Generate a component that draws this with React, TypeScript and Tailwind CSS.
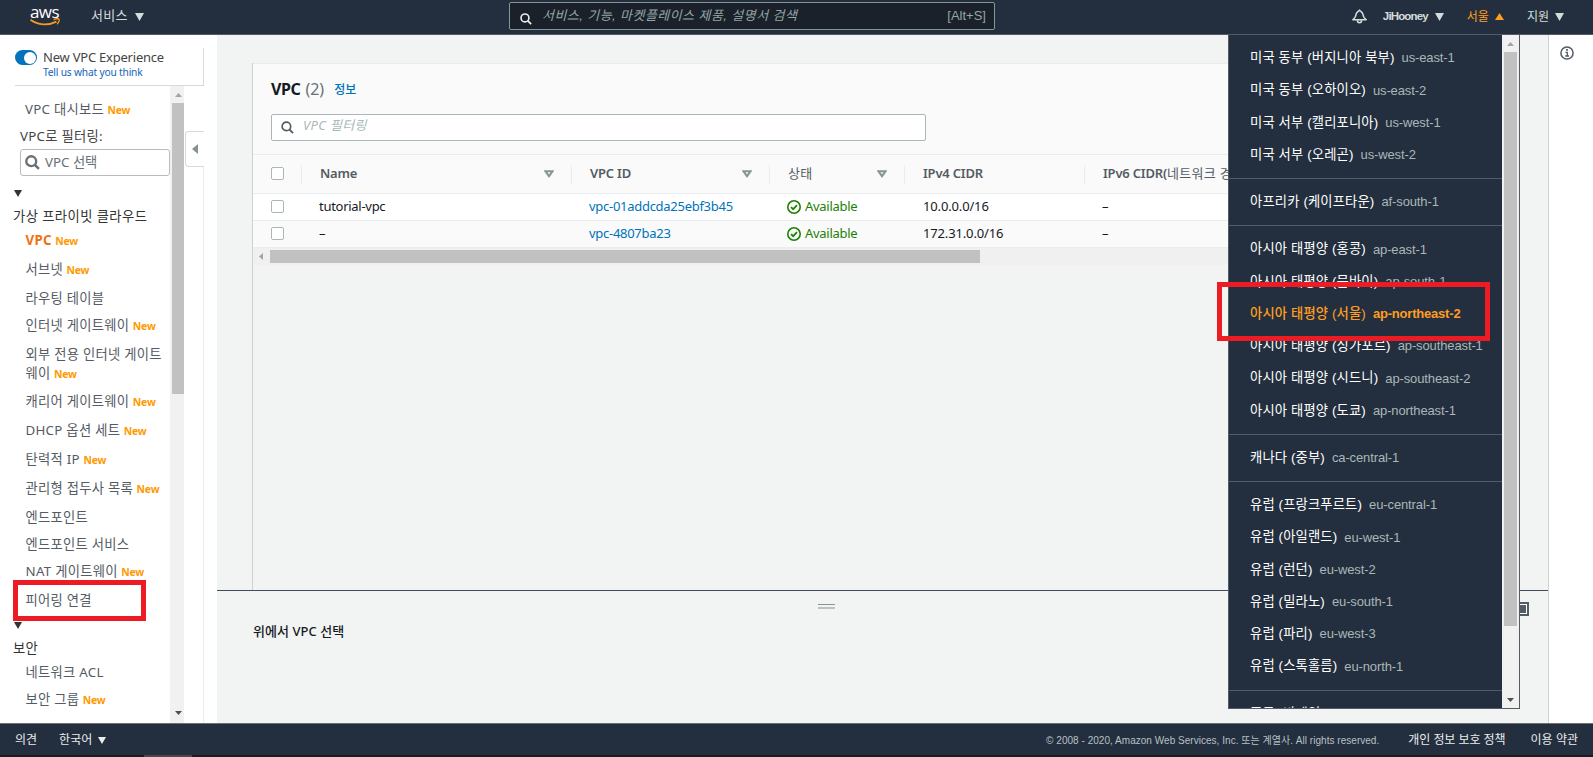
import { useState } from 'react';

interface NavEntry {
  label: string;
  isNew?: boolean;
  active?: boolean;
  size: string;
}

interface Region {
  name: string;
  code: string;
}

const vpcLinks: NavEntry[] = [
  { label: 'VPC', isNew: true, active: true, size: 'h-[29px]' },
  { label: '서브넷', isNew: true, size: 'h-[29px]' },
  { label: '라우팅 테이블', size: 'h-[27px]' },
  { label: '인터넷 게이트웨이', isNew: true, size: 'h-[29px]' },
  { label: '외부 전용 인터넷 게이트웨이', isNew: true, size: 'h-[47px]' },
  { label: '캐리어 게이트웨이', isNew: true, size: 'h-[29px]' },
  { label: 'DHCP 옵션 세트', isNew: true, size: 'h-[29px]' },
  { label: '탄력적 IP', isNew: true, size: 'h-[29px]' },
  { label: '관리형 접두사 목록', isNew: true, size: 'h-[29px]' },
  { label: '엔드포인트', size: 'h-[27px]' },
  { label: '엔드포인트 서비스', size: 'h-[27px]' },
  { label: 'NAT 게이트웨이', isNew: true, size: 'h-[29px]' },
  { label: '피어링 연결', size: 'h-[28px]' },
];

const securityLinks: NavEntry[] = [
  { label: '네트워크 ACL', size: 'h-[27px]' },
  { label: '보안 그룹', isNew: true, size: 'h-[27px]' },
];

const regionGroups: Region[][] = [
  [
    { name: '미국 동부 (버지니아 북부)', code: 'us-east-1' },
    { name: '미국 동부 (오하이오)', code: 'us-east-2' },
    { name: '미국 서부 (캘리포니아)', code: 'us-west-1' },
    { name: '미국 서부 (오레곤)', code: 'us-west-2' },
  ],
  [{ name: '아프리카 (케이프타운)', code: 'af-south-1' }],
  [
    { name: '아시아 태평양 (홍콩)', code: 'ap-east-1' },
    { name: '아시아 태평양 (뭄바이)', code: 'ap-south-1' },
    { name: '아시아 태평양 (서울)', code: 'ap-northeast-2' },
    { name: '아시아 태평양 (싱가포르)', code: 'ap-southeast-1' },
    { name: '아시아 태평양 (시드니)', code: 'ap-southeast-2' },
    { name: '아시아 태평양 (도쿄)', code: 'ap-northeast-1' },
  ],
  [{ name: '캐나다 (중부)', code: 'ca-central-1' }],
  [
    { name: '유럽 (프랑크푸르트)', code: 'eu-central-1' },
    { name: '유럽 (아일랜드)', code: 'eu-west-1' },
    { name: '유럽 (런던)', code: 'eu-west-2' },
    { name: '유럽 (밀라노)', code: 'eu-south-1' },
    { name: '유럽 (파리)', code: 'eu-west-3' },
    { name: '유럽 (스톡홀름)', code: 'eu-north-1' },
  ],
  [{ name: '중동 (바레인)', code: 'me-south-1' }],
];

const columns = [
  { title: 'Name', width: 'w-[270px]', sortable: true },
  { title: 'VPC ID', width: 'w-[198px]', sortable: true },
  { title: '', korean: '상태', width: 'w-[135px]', sortable: true },
  { title: 'IPv4 CIDR', width: 'w-[180px]', sortable: false },
  { title: 'IPv6 CIDR(', korean: '네트워크 경계 그룹)', width: 'w-[260px]', sortable: false },
];

const vpcs = [
  { name: 'tutorial-vpc', id: 'vpc-01addcda25ebf3b45', cidr: '10.0.0.0/16', bg: 'bg-white' },
  { name: '–', id: 'vpc-4807ba23', cidr: '172.31.0.0/16', bg: 'bg-[#fafafa]' },
];

function Triangle({ className, up = false }: { className: string; up?: boolean }) {
  return (
    <svg viewBox="0 0 10 8" preserveAspectRatio="none" className={`shrink-0 ${className}`}>
      <path d={up ? 'M0 8L5 0L10 8Z' : 'M0 0H10L5 8Z'} fill="currentColor" />
    </svg>
  );
}

function SearchIcon({ className, weight = 2 }: { className: string; weight?: number }) {
  return (
    <svg viewBox="0 0 14 14" fill="none" stroke="currentColor" className={`shrink-0 ${className}`}>
      <circle cx="5.8" cy="5.8" r="4.6" strokeWidth={weight} />
      <path d="M9.2 9.2L13 13" strokeWidth={weight + 0.2} />
    </svg>
  );
}

function AwsLogo() {
  return (
    <div className="relative ml-[30px] h-[20px] w-[30px]">
      <span className="absolute left-0 -top-[5px] font-['Open_Sans'] text-[17px] leading-[20px] font-medium tracking-[-0.6px] text-white">
        aws
      </span>
      <svg viewBox="0 0 30 8" fill="none" className="absolute top-[11px] left-0 h-[8px] w-[30px]">
        <path d="M0.5 1.8C8 7.4 18 7.8 26.5 3.6" stroke="#f7981f" strokeWidth="1.8" />
        <path d="M23.6 1.6C26 0.6 28.6 0.7 29 1.3C29.4 2.2 28.6 4.6 27.2 6.2" stroke="#f7981f" strokeWidth="1.3" />
      </svg>
    </div>
  );
}

function NewTag() {
  return <span className="ml-[3.5px] text-[10.4px] font-bold tracking-[-0.2px] text-[#ff9900]">New</span>;
}

function NavItem({ label, isNew, active, size }: NavEntry) {
  return (
    <div className={`box-content w-[143px] pl-[25.5px] leading-[18.5px] break-all ${size} ${active ? 'font-bold text-[#ec7211]' : ''}`}>
      {label}
      {isNew && <NewTag />}
    </div>
  );
}

function Sidebar() {
  const [experience, setExperience] = useState(true);

  return (
    <aside className="flex w-[217px] shrink-0 bg-white font-['Noto_Sans','Noto_Sans_CJK_KR',sans-serif] text-[13.3px] text-[#545b64]">
      <div className="flex w-[204px] flex-col">
        <div className="mt-[13px] ml-[15px] flex h-[38px] border-r border-b border-[#d5dbdb]">
          <button
            onClick={() => setExperience(!experience)}
            className={`mt-[2px] flex h-[15px] w-[22px] items-center rounded-full px-[1.5px] ${experience ? 'justify-end bg-[#0073bb]' : 'bg-gray-400'}`}
          >
            <span className="size-[12px] rounded-full bg-white" />
          </button>
          <div className="ml-[6px]">
            <div className="text-[13px] leading-[19px] tracking-[-0.22px] whitespace-nowrap text-[#444]">New VPC Experience</div>
            <div className="text-[10.2px] leading-[11px] tracking-[-0.18px] text-[#1166bb]">Tell us what you think</div>
          </div>
        </div>

        <div className="flex min-h-0 flex-1">
          <div className="w-[170px] shrink-0 overflow-hidden tracking-[0.28px]">
            <div className="mt-[14px] h-[27px] pl-[25px] leading-[19px]">
              VPC 대시보드
              <NewTag />
            </div>
            <div className="h-[22px] pl-[20px] leading-[19px] text-[#444]">VPC로 필터링:</div>
            <div className="ml-[20px] flex h-[27px] w-[150px] items-center rounded-[3px] border border-[#bbb] pl-[4px] tracking-normal text-[#687078]">
              <SearchIcon className="size-[15px]" weight={2.2} />
              <span className="ml-[5px]">VPC 선택</span>
            </div>
            <Triangle className="mt-[14px] ml-[14px] h-[7px] w-[8px] text-[#333]" />
            <div className="mt-[10px] h-[24px] pl-[13px] leading-[19px] tracking-[0.42px] text-[#333]">가상 프라이빗 클라우드</div>
            {vpcLinks.map((link) => (
              <NavItem key={link.label} {...link} />
            ))}
            <Triangle className="mt-[3px] ml-[14px] h-[7px] w-[8px] text-[#333]" />
            <div className="mt-[10px] h-[24px] pl-[13px] leading-[19px] text-[#333]">보안</div>
            {securityLinks.map((link) => (
              <NavItem key={link.label} {...link} />
            ))}
          </div>
          <div className="flex w-[14px] shrink-0 flex-col items-end bg-[#f1f1f1]">
            <div className="flex h-[17px] w-[12px] items-center justify-center">
              <Triangle up className="h-[4px] w-[7px] text-[#a3a3a3]" />
            </div>
            <div className="h-[291px] w-[12px] bg-[#c1c1c1]" />
            <div className="mt-auto mb-[2px] flex h-[17px] w-[12px] items-center justify-center">
              <Triangle className="h-[4px] w-[7px] text-[#505050]" />
            </div>
          </div>
          <div className="flex flex-1 flex-col">
            <button className="mt-[45px] ml-[1px] flex h-[36px] items-center rounded-l-[4px] border border-r-0 border-[#d5dbdb] pl-[6px]">
              <svg viewBox="0 0 6 10" className="h-[10px] w-[6px]">
                <path d="M6 0V10L0 5Z" fill="#879196" />
              </svg>
            </button>
            <div className="flex-1 border-r border-[#eaeded]" />
          </div>
        </div>
      </div>
    </aside>
  );
}

function Checkbox() {
  return <span className="mb-[2px] block size-[13px] shrink-0 rounded-[2px] border border-[#aab7b8] bg-white" />;
}

function StatusCell() {
  return (
    <span className="flex items-center text-[#1d8102]">
      <svg viewBox="0 0 14 14" fill="none" stroke="currentColor" className="mr-[4px] size-[14px]">
        <circle cx="7" cy="7" r="6.2" strokeWidth="1.6" />
        <path d="M4 7.1L6.2 9.2L10 5.2" strokeWidth="1.7" />
      </svg>
      Available
    </span>
  );
}

function VpcTable() {
  return (
    <section className="mr-[28px] ml-[35px] flex flex-1 flex-col overflow-hidden border-l border-[#ccd1d1] font-['Noto_Sans','Noto_Sans_CJK_KR',sans-serif] text-[13px] text-[#16191f]">
      <div className="h-[92px] shrink-0 border-t border-b border-[#eaeded] bg-[#fafafa] pl-[18px]">
        <div className="flex h-[50px] items-center">
          <h2 className="text-[16px] font-bold tracking-[-0.4px]">VPC</h2>
          <span className="ml-[5px] text-[16px] text-[#687078]">(2)</span>
          <a className="ml-[10px] pt-[2px] text-[12px] font-medium text-[#0073bb]">정보</a>
        </div>
        <div className="flex h-[27px] w-[655px] items-center rounded-[2px] border border-[#aab7b8] bg-white pl-[9px]">
          <SearchIcon className="size-[13px] text-[#545b64]" weight={1.8} />
          <span className="ml-[9px] pb-[3px] tracking-[0.35px] text-[#aab7b8] italic">VPC 필터링</span>
        </div>
      </div>
      <div className="flex h-[39px] shrink-0 items-center border-b border-[#eaeded] bg-[#fafafa] pl-[18px] font-semibold tracking-[-0.2px] text-[#545b64]">
        <div className="w-[30px] shrink-0">
          <Checkbox />
        </div>
        {columns.map((col) => (
          <div key={col.width} className={`flex h-[19px] shrink-0 items-center border-l border-[#eaeded] pr-[17px] pl-[18px] whitespace-nowrap ${col.width}`}>
            {col.title}
            {col.korean && <span className="font-normal tracking-[0.3px]">{col.korean}</span>}
            {col.sortable && (
              <svg viewBox="0 0 10 8" fill="none" className="ml-auto h-[8px] w-[10px]">
                <path d="M1.4 1.2H8.6L5 6.2Z" stroke="#879596" strokeWidth="2" />
              </svg>
            )}
          </div>
        ))}
      </div>
      {vpcs.map((vpc) => (
        <div key={vpc.id} className={`flex h-[27px] shrink-0 items-center border-b border-[#eaeded] pl-[18px] tracking-[-0.28px] ${vpc.bg}`}>
          <div className="w-[48px] shrink-0">
            <Checkbox />
          </div>
          <div className="w-[270px] shrink-0">{vpc.name}</div>
          <div className="w-[198px] shrink-0 text-[#0073bb]">{vpc.id}</div>
          <div className="w-[136px] shrink-0">
            <StatusCell />
          </div>
          <div className="w-[179px] shrink-0 tracking-[-0.15px]">{vpc.cidr}</div>
          <div className="shrink-0">–</div>
        </div>
      ))}
      <div className="flex h-[17px] shrink-0 items-center bg-[#f0f0f0] pl-[6px]">
        <svg viewBox="0 0 4 7" className="h-[7px] w-[4px]">
          <path d="M4 0V7L0 3.5Z" fill="#a3a3a3" />
        </svg>
        <div className="ml-[7px] h-[13px] w-[710px] bg-[#c1c1c1]" />
      </div>
    </section>
  );
}

function DetailPane() {
  return (
    <div className="flex h-[133px] shrink-0 flex-col border-t border-[#414d5c]">
      <div className="flex h-[30px] items-center pl-[601px]">
        <div className="h-[5px] w-[17px] border-t border-b-2 border-t-[#879596] border-b-[#bcc2c2]" />
        <svg viewBox="0 0 14 14" className="mt-[6px] mr-[19px] ml-auto size-[14px]">
          <path d="M1 1H13V13H1Z" fill="#fff" stroke="#545b64" strokeWidth="2" />
          <rect x="3" y="3" width="8" height="8" fill="#545b64" />
        </svg>
      </div>
      <div className="mt-[2px] pl-[36px] font-['Noto_Sans','Noto_Sans_CJK_KR',sans-serif] text-[13px] leading-[17px] font-medium tracking-[0.05px] text-[#16191f]">
        위에서 VPC 선택
      </div>
    </div>
  );
}

function RegionMenu({ selected, onSelect }: { selected: string; onSelect: (code: string) => void }) {
  return (
    <div className="absolute top-[34px] left-[1228px] flex h-[675px] w-[292px] border border-[#545b64] bg-[#232f3e] font-['Liberation_Sans','Noto_Sans_CJK_KR',sans-serif]">
      <div className="flex-1 overflow-hidden">
        {regionGroups.map((group) => (
          <ul key={group[0].code} className="border-b border-[#545b64] py-[7px]">
            {group.map((region) => {
              const current = region.code === selected;
              return (
                <li
                  key={region.code}
                  onClick={() => onSelect(region.code)}
                  className={`flex h-[32.25px] items-center pl-[21px] whitespace-nowrap ${current ? 'font-bold text-[#ff9d1e]' : 'text-white'}`}
                >
                  <span className={`text-[13.3px] tracking-[0.15px] ${current ? 'font-medium' : ''}`}>{region.name}</span>
                  <span className={`ml-[7px] text-[13px] ${current ? 'tracking-[-0.2px]' : 'tracking-[-0.12px] text-[#aab7b8]'}`}>{region.code}</span>
                </li>
              );
            })}
          </ul>
        ))}
      </div>
      <div className="flex w-[17px] shrink-0 flex-col items-center bg-[#f1f1f1]">
        <div className="flex h-[17px] items-center">
          <Triangle up className="h-[4px] w-[7px] text-[#a3a3a3]" />
        </div>
        <div className="h-[574px] w-[13px] bg-[#c1c1c1]" />
        <div className="mt-auto flex h-[17px] items-center">
          <Triangle className="h-[4px] w-[7px] text-[#505050]" />
        </div>
      </div>
    </div>
  );
}

function TopBar() {
  return (
    <header className="flex h-[35px] shrink-0 items-center border-b border-[#545b64] bg-[#232f3e] font-['Liberation_Sans','Noto_Sans_CJK_KR',sans-serif] text-[#d5dbdb]">
      <AwsLogo />
      <div className="ml-[31px] flex w-[418px] items-center pb-[3px] text-[13px] tracking-[0.3px]">
        서비스
        <Triangle className="mt-[3px] ml-[7px] h-[8px] w-[9px]" />
      </div>
      <div className="mb-[3px] flex h-[28px] w-[486px] items-center rounded-[2px] border border-[#879596] bg-[#1a212b] pr-[8px] pl-[10px] text-[#95a5a6]">
        <SearchIcon className="mt-[6px] size-[12px] text-[#eaeded]" weight={1.9} />
        <span className="ml-[10px] text-[13px] tracking-[0.43px] italic">서비스, 기능, 마켓플레이스 제품, 설명서 검색</span>
        <span className="ml-auto text-[13px]">[Alt+S]</span>
      </div>
      <div className="ml-auto flex items-center pr-[29px] pb-[1px] text-[12px]">
        <svg viewBox="0 0 16 16" fill="none" stroke="currentColor" strokeWidth="1.7" className="size-[15px]">
          <path d="M8 1.2C8.9 2.6 11.4 3 11.6 5.6C11.8 8.6 13 9.6 15 11.4H1C3 9.6 4.2 8.6 4.4 5.6C4.6 3 7.1 2.6 8 1.2Z" strokeLinejoin="round" />
          <path d="M5.8 12C5.8 15.6 10.2 15.6 10.2 12" />
        </svg>
        <span className="ml-[16px] text-[11.5px] font-bold tracking-[-0.85px]">JiHooney</span>
        <Triangle className="ml-[7px] h-[8px] w-[9px]" />
        <span className="ml-[23px] text-[#ff9d1e]">서울</span>
        <Triangle up className="ml-[6px] h-[7px] w-[9px] text-[#ff9d1e]" />
        <span className="ml-[23px]">지원</span>
        <Triangle className="ml-[6px] h-[8px] w-[9px]" />
      </div>
    </header>
  );
}

function Footer() {
  return (
    <footer className="shrink-0 border-t border-[#687078] bg-[#232f3e] font-['Liberation_Sans','Noto_Sans_CJK_KR',sans-serif] text-[12px] text-[#eaeded]">
      <div className="flex h-[31px] items-center pt-[1px] pr-[15px] pl-[15px]">
        <span>의견</span>
        <span className="ml-[22px]">한국어</span>
        <Triangle className="ml-[6px] h-[7px] w-[8px]" />
        <span className="ml-auto text-[10px] tracking-[0.03px] text-[#b8c0c4]">© 2008 - 2020, Amazon Web Services, Inc. 또는 계열사. All rights reserved.</span>
        <span className="ml-[29px] tracking-[-0.1px]">개인 정보 보호 정책</span>
        <span className="ml-[25px]">이용 약관</span>
      </div>
      <div className="h-[2px] bg-[#1c1c1e] pl-[144px]">
        <div className="h-[2px] w-[48px] bg-[#4a4a4c]" />
      </div>
    </footer>
  );
}

export default function App() {
  const [region, setRegion] = useState('ap-northeast-2');

  return (
    <div className="relative flex h-[757px] w-[1593px] flex-col overflow-hidden bg-white">
      <TopBar />
      <div className="flex min-h-0 flex-1">
        <Sidebar />
        <main className="flex w-[1332px] shrink-0 flex-col border-r border-[#ccd1d1] bg-[#f2f3f3] pt-[28px]">
          <VpcTable />
          <DetailPane />
        </main>
        <div className="flex-1 pt-[11px] pl-[11px]">
          <svg viewBox="0 0 14 14" fill="none" stroke="#545b64" className="size-[14px]">
            <circle cx="7" cy="7" r="6.1" strokeWidth="1.5" />
            <path d="M5.5 6.3H7.3V10M5.2 10H9" strokeWidth="1.3" />
            <path d="M6.1 3.9H7.9" strokeWidth="1.6" />
          </svg>
        </div>
      </div>
      <Footer />

      <RegionMenu selected={region} onSelect={setRegion} />

      {/* callout frames */}
      <div className="pointer-events-none absolute top-[580px] left-[13px] h-[41px] w-[133px] border-5 border-[#ed1c24]" />
      <div className="pointer-events-none absolute top-[282px] left-[1217px] h-[59px] w-[273px] border-5 border-[#ed1c24]" />
    </div>
  );
}
